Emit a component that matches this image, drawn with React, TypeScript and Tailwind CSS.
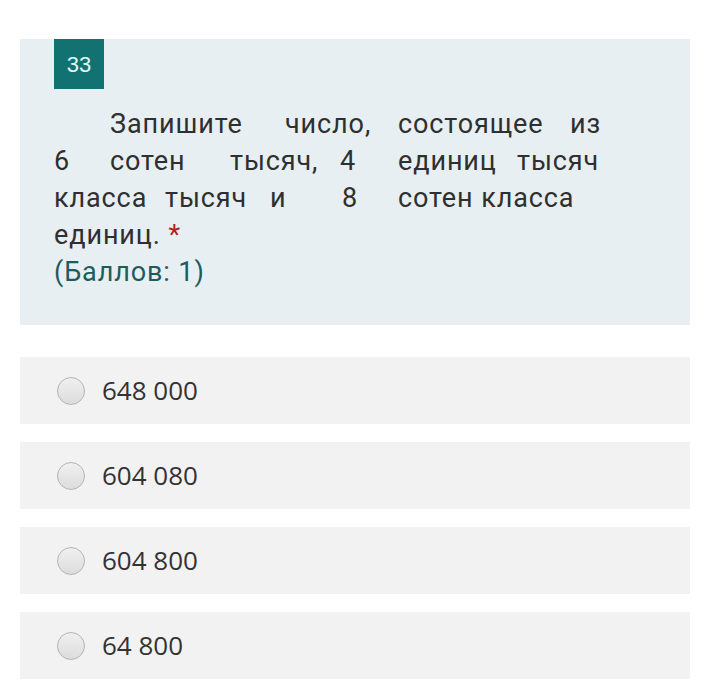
import React from 'react';

const options = ['648 000', '604 080', '604 800', '64 800'];

// word start positions copied from the source layout (tab-aligned columns)
const lines: { text: string; w?: string }[][] = [
  [
    { text: 'Запишите', w: 'w-[175px]' },
    { text: 'число,', w: 'w-[113px]' },
    { text: 'состоящее', w: 'w-[172px]' },
    { text: 'из' },
  ],
  [
    { text: '6', w: 'w-[56px]' },
    { text: 'сотен', w: 'w-[120px]' },
    { text: 'тысяч,', w: 'w-[110px]' },
    { text: '4', w: 'w-[58px]' },
    { text: 'единиц', w: 'w-[119px]' },
    { text: 'тысяч' },
  ],
  [
    { text: 'класса', w: 'w-[111px]' },
    { text: 'тысяч', w: 'w-[105px]' },
    { text: 'и', w: 'w-[72px]' },
    { text: '8', w: 'w-[56px]' },
    { text: 'сотен класса' },
  ],
];

const App = () => {
  return (
    <div className="w-[714px] h-[692px] bg-white pt-[39px] pl-[20px] pr-[24px] font-['Roboto',sans-serif] overflow-hidden">
      <div className="bg-[#e7eff2] h-[286px] px-[34px]">
        <div className="w-[50px] h-[50px] bg-[#127272] flex items-center justify-center text-[22px] text-[#e2f9f9] font-['Liberation_Sans',sans-serif]">
          33
        </div>
        <div className="mt-[17px] text-[27px] tracking-[0.9px] leading-[37px] text-[#2f2f2f]">
          {lines.map((line, i) => (
            <div key={i} className={`flex whitespace-nowrap ${i === 0 ? 'pl-[56px]' : ''}`}>
              {line.map((word, j) => (
                <span key={j} className={`inline-block ${word.w ?? ''}`}>{word.text}</span>
              ))}
            </div>
          ))}
          <div>
            единиц. <span className="text-[#b5201d]">*</span>
          </div>
          <div className="text-[#1d5c5c]">(Баллов: 1)</div>
        </div>
      </div>

      <div className="mt-[32px] flex flex-col gap-[18px]">
        {options.map(opt => (
          <label key={opt} className="h-[67px] bg-[#f2f2f2] flex items-center pl-[37px]">
            <span className="w-[28px] h-[28px] rounded-full border border-[#b4b4b4] bg-gradient-to-b from-[#f0f0f0] to-[#dcdcdc] shrink-0"></span>
            <span className="ml-[17px] text-[26px] text-[#333] font-['Open_Sans',sans-serif]">{opt}</span>
          </label>
        ))}
      </div>
    </div>
  );
};

export default App;
